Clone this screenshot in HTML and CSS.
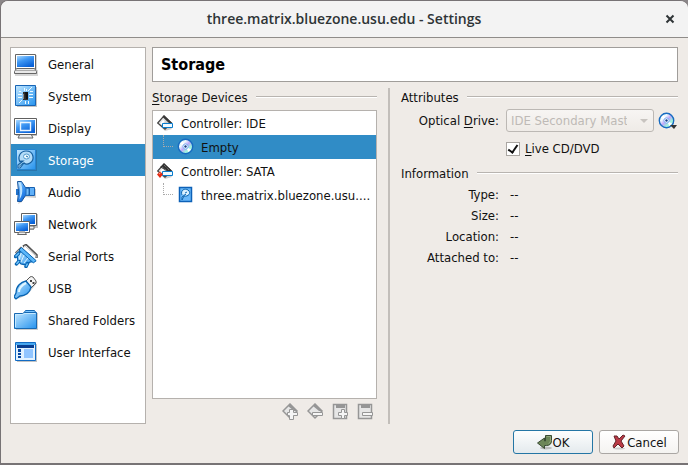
FILE: index.html
```html
<!DOCTYPE html>
<html lang="en">
<head>
<meta charset="utf-8">
<title>three.matrix.bluezone.usu.edu - Settings</title>
<link rel="stylesheet" href="styles.css">
</head>
<body>
<svg class="defs" aria-hidden="true">
  <defs>
    <linearGradient id="blue" x1="0" y1="0" x2=".6" y2="1"><stop offset="0" stop-color="#a8d8ff"/><stop offset=".45" stop-color="#3f98f4"/><stop offset="1" stop-color="#0b63d8"/></linearGradient>
    <linearGradient id="sky" x1="0" y1="0" x2="1" y2="1"><stop offset="0" stop-color="#c4e8ff"/><stop offset="1" stop-color="#2492ee"/></linearGradient>
    <linearGradient id="metal" x1="0" y1="0" x2="1" y2="1"><stop offset="0" stop-color="#fff"/><stop offset="1" stop-color="#aaa"/></linearGradient>
    <linearGradient id="disc" x1="0" y1="0" x2="1" y2="1"><stop offset="0" stop-color="#8cc8f4"/><stop offset=".3" stop-color="#f4ffff"/><stop offset=".5" stop-color="#c0a8f8"/><stop offset=".7" stop-color="#9df5dc"/><stop offset="1" stop-color="#eaf8ff"/></linearGradient>
    <symbol id="cd" viewBox="0 0 18 18">
      <circle cx="8.5" cy="8.500" r="7.200" fill="url(#disc)" stroke="#176bc1" stroke-width="1.400"/>
      <path d="M8.500 8.500L3 5.500 5.500 3z" fill="#fff"/><path d="M8.500 8.500L14 11.500 11.500 14z" fill="#fff"/>
      <circle cx="8.500" cy="8.500" r="2.600" fill="#fff" stroke="#78aef5"/><circle cx="8.500" cy="8.500" r="1.200" fill="#143e8b"/>
    </symbol>
    <symbol id="card" viewBox="0 0 18 18">
      <path d="M2 11l6 6 7-2-3-4z" fill="#888" opacity=".4"/>
      <path d="M.700 9L7 1.800 14.500 9 8 15.300z" fill="url(#metal)" stroke="#444" stroke-width="1.200"/>
      <path d="M7 1.200L15 9h-3L5.500 3z" fill="#383838"/>
      <path d="M4 10L7 6.500" stroke="#fff" stroke-width="2"/>
    </symbol>
    <symbol id="bar" viewBox="0 0 18 18"><path d="M5.500 9.500h10v4h-10z" fill="#f2faff" stroke="#087ccd"/></symbol>
  </defs>
</svg>
<div class="window">
  <header class="titlebar">
    <h1>three.matrix.bluezone.usu.edu - Settings</h1>
    <button class="close" aria-label="Close"><svg viewBox="0 0 10 10"><path d="M1.500 1.500l7 7M8.500 1.500l-7 7" stroke="#2e3436" stroke-width="2"/></svg></button>
  </header>
  <div class="content">
    <nav class="sidebar" aria-label="Settings categories">
      <a href="#general"><svg viewBox="0 0 24 24"><path d="M2 3h21v15h1v6H1v-6h1z" fill="#999" opacity=".4"/><path d="M1.500 2.500h20v15h-20z" fill="#fff" stroke="#666"/><path d="M3 4h17v11H3z" fill="url(#blue)"/><path d="M.500 19.500l2-3h18l2 3v2H.500z" fill="#e9e9e9" stroke="#666"/><path d="M2 18.500h19" stroke="#aaa"/></svg>General</a>
      <a href="#system"><svg viewBox="0 0 24 24"><path d="M3 3h20v20H3z" fill="#888" opacity=".5"/><path d="M1.500 1.500h20v20h-20z" fill="url(#sky)" stroke="#1764b5"/><path d="M9 8h5v8H9z" fill="#303030"/><path d="M11 8h3v7h-2z" fill="#111"/><path d="M9.500 10v5" stroke="#888"/><path d="M4 10.500h4M4 13.500h4M5 7.500h2l1 1M15 10.500h4M15 13.500h4M14 7l4-4M10.500 4v3M12.500 5v2M11.500 17v3M14.500 17v3M8 16l-3 3M16 7.500h3" stroke="#eefaff" fill="none"/></svg>System</a>
      <a href="#display"><svg viewBox="0 0 24 24"><path d="M2 4h21v16H2z" fill="#888" opacity=".5"/><path d="M6 18h11l2 4H4z" fill="#eee" stroke="#666"/><path d="M.500 2.500h22v16h-22z" fill="#fff" stroke="#606060"/><path d="M2 4h19v13H2z" fill="url(#blue)"/><path d="M6.500 6.500h10v8h-10z" fill="none" stroke="#eaf5ff" stroke-width="1.400"/></svg>Display</a>
      <a class="current" href="#storage" aria-current="page"><svg viewBox="0 0 24 24"><path d="M3 2h20v21H3z" fill="#245e91" opacity=".5"/><path d="M2.500 1.500h19v20h-19z" fill="url(#sky)" stroke="#2584d1"/><path d="M6 14C3 8 7 3 12 3c8 0 9 9 4 12-3 2-5 1-6 0l-4 5H4v-3l5-4c-2 0-3 0-3 1z" fill="#b3dcf8" stroke="#165f9f" stroke-width="1.200"/><ellipse cx="12.500" cy="8.500" rx="3" ry="2.500" fill="#edfaff" stroke="#529acc"/><path d="M12 8l2 1M9 15l-4 3.500" stroke="#146aaa"/></svg>Storage</a>
      <a href="#audio"><svg viewBox="0 0 24 24"><path d="M10 7l12 2v9l-12-1-2 5-4 2z" fill="#888" opacity=".4"/><path d="M2 9h3v6H2z" fill="#2374cd"/><path d="M3.500 1.500h4l4 6h4v8h-4l-4 6h-4q2-10 0-20z" fill="url(#blue)" stroke="#17549b"/><path d="M4.500 2.500h2c3 6 2 13-1 17 1-6 1-12-1-17z" fill="#bce3ff"/><path d="M12 8l3 .500v6.500l-3 .500z" fill="#75bdfa" stroke="#246cb5"/><path d="M15.500 7.500h5v8h-5z" fill="#60b0f8" stroke="#1760b1"/></svg>Audio</a>
      <a href="#network"><svg viewBox="0 0 24 24"><path d="M9 2h15v14h-4v2H10z" fill="#999" opacity=".6"/><path d="M7.500 1.500h15v12h-15z" fill="#fff" stroke="#606060"/><path d="M9 3h12v9H9z" fill="url(#blue)"/><path d="M13 14h7v3h-9z" fill="#eee" stroke="#666"/><path d="M.500 9.500h15v11H.500z" fill="#fff" stroke="#606060"/><path d="M2 11h12v8H2z" fill="url(#blue)"/><path d="M5 20h6l1.500 2.500h-9z" fill="#eee" stroke="#666"/></svg>Network</a>
      <a href="#serial"><svg viewBox="0 0 24 24"><path d="M2 9.500L8 3.500" stroke="#666" stroke-width="3"/><path d="M2.500 9L8 3.500" stroke="#eee"/><path d="M9 2.500L12 1l10.500 10v3" fill="none" stroke="#555" stroke-width="2.500"/><path d="M10 2.500l2-.500 10 9.500v2" fill="none" stroke="#eee"/><path d="M3 11l5-6L21 17l-5 1-4 3-5-1-3-3z" fill="url(#sky)" stroke="#0864b2" stroke-width="1.300"/><path d="M5 6L7.500 3.500 22 16.500 19.500 19z" fill="#5bb7fa" stroke="#0864b2"/><path d="M5 17l-2.500 3M13.500 19.500L12 22.500M1.500 12.500L5 9" stroke="#0864b2" stroke-width="3.500" stroke-linecap="round"/><path d="M5 17l-2.500 3M13.500 19.500L12 22.500M1.500 12.500L5 9" stroke="#6fc3fb" stroke-width="1.500"/><path d="M7 9l-2 7M10 11l-3 7M14 14l-4 5" stroke="#dbf3ff"/></svg>Serial Ports</a>
      <a href="#usb"><svg viewBox="0 0 24 24"><path d="M4 23l10-5 9-11-2-3z" fill="#777" opacity=".4"/><path d="M12 5l4-4q1-1 3 0l3 4v2l-5 5z" fill="#f4f4f4" stroke="#555"/><path d="M16 4h2v2h-2zM18.500 6h2v2h-2z" fill="#444"/><path d="M2 17c0-7 5-11 10-12l5 6c-1 6-6 9-11 9l-4 3-2-2z" fill="url(#sky)" stroke="#0864b2" stroke-width="1.300"/><path d="M5 16c0-4 3-7 7-9" stroke="#e2f6ff" stroke-width="2" fill="none"/></svg>USB</a>
      <a href="#folders"><svg viewBox="0 0 24 24"><path d="M2 5h22v17H2z" fill="#999" opacity=".5"/><path d="M9.500 5.500l2-3h9l2 3v4h-13z" fill="#7cc7ff" stroke="#1769b3"/><path d="M12 4.500h9" stroke="#e4f6ff"/><path d="M.500 5.500h8l2-1h12v16H.500z" fill="url(#sky)" stroke="#1769b3"/><path d="M1.500 19V6.500h7l2-1h11" fill="none" stroke="#c5e9ff"/></svg>Shared Folders</a>
      <a href="#interface"><svg viewBox="0 0 24 24"><path d="M3 4h20v18H3z" fill="#888" opacity=".5"/><path d="M1.500 2.500h20v18h-20z" fill="#e2f2ff" stroke="#126bc3"/><path d="M2 3h19v2H2z" fill="#46a7ef"/><path d="M3 5h17v3H3z" fill="#083e91"/><path d="M4 9h3v3H4zM4 13h3v2H4zM4 16h3v2H4z" fill="#0749a2"/><path d="M10 9h9v9h-9z" fill="#91c5ff"/></svg>User Interface</a>
    </nav>
    <main class="page">
      <h2>Storage</h2>
      <div class="panes">
        <section class="devices">
          <h3><span><u>S</u>torage Devices</span></h3>
          <ul class="tree" role="tree" aria-label="Storage Devices">
            <li class="controller" role="treeitem"><svg viewBox="0 0 18 18"><use href="#card"/><use href="#bar"/></svg>Controller: IDE</li>
            <li class="device selected" role="treeitem" aria-selected="true"><i></i><svg viewBox="0 0 18 18"><use href="#cd"/></svg><span>Empty</span></li>
            <li class="controller" role="treeitem"><svg viewBox="0 0 18 18"><use href="#card"/><path d="M3 5l4-3 7 6-3 2z" fill="#333"/><path d="M5 5l5 4M7 3l5 5" stroke="#888" stroke-dasharray="1 1"/><use href="#bar"/><path d="M0 12.500L3 9.500 6 12.500 3 16z" fill="#e52b13"/><path d="M2 12l1.500-1" stroke="#ffb09c"/></svg>Controller: SATA</li>
            <li class="device" role="treeitem"><i></i><svg viewBox="0 0 18 18"><path d="M2.500 1.500h12v14h-12z" fill="#68b8fa" stroke="#0d61b7" stroke-width="1.500"/><path d="M5 9c-2-5 3-7 6-5 4 3 0 7-4 6l-2 4v-3l4-3" fill="#d9f1ff" stroke="#0963ae"/><path d="M8 7l2-1" stroke="#166db7"/></svg><span>three.matrix.bluezone.usu....</span></li>
          </ul>
          <div class="tools">
            <button disabled aria-label="Add controller"><svg viewBox="0 0 18 18"><path d="M1 8L8 1l7 7-7 7z" fill="#e6e6e6" stroke="#969696" stroke-width="1.500"/><path d="M8 1l7 7h-3L6 3z" fill="#969696"/><path d="M7.500 9.500v-3h4v3h4v3h-4v4h-4v-4h-2v-3z" fill="#f5f5f5" stroke="#969696"/></svg></button>
            <button disabled aria-label="Remove controller"><svg viewBox="0 0 18 18"><path d="M1 8L8 1l7 7-7 7z" fill="#e6e6e6" stroke="#969696" stroke-width="1.500"/><path d="M8 1l7 7h-3L6 3z" fill="#969696"/><path d="M5.500 9.500h10v3h-10z" fill="#f5f5f5" stroke="#969696"/></svg></button>
            <button disabled aria-label="Add attachment"><svg viewBox="0 0 18 18"><path d="M1.500 1.500h13v14h-13z" fill="#e6e6e6" stroke="#969696" stroke-width="1.500"/><path d="M4 1h9v4H4z" fill="#969696"/><path d="M9.500 9.500v-3h3v3h3v3h-3v3h-3v-3h-3v-3z" fill="#f5f5f5" stroke="#969696"/></svg></button>
            <button disabled aria-label="Remove attachment"><svg viewBox="0 0 18 18"><path d="M1.500 1.500h13v14h-13z" fill="#e6e6e6" stroke="#969696" stroke-width="1.500"/><path d="M4 1h9v4H4z" fill="#969696"/><path d="M5.500 9.500h10v3h-10z" fill="#f5f5f5" stroke="#969696"/></svg></button>
          </div>
        </section>
        <section class="details">
          <h3>Attributes</h3>
          <div class="fields attributes">
            <label for="drive">Optical <u>D</u>rive:</label>
            <div class="drive">
              <select id="drive" disabled><option>IDE Secondary Master</option></select>
              <button class="choose" aria-label="Choose optical disk"><svg viewBox="0 0 20 18"><use href="#cd" width="18" height="18"/><path d="M12 13h7l-3 4z" fill="#333"/></svg></button>
            </div>
            <label class="check"><input type="checkbox" checked><span><u>L</u>ive CD/DVD</span></label>
          </div>
          <h3>Information</h3>
          <dl class="fields">
            <dt>Type:</dt><dd>--</dd>
            <dt>Size:</dt><dd>--</dd>
            <dt>Location:</dt><dd>--</dd>
            <dt>Attached to:</dt><dd>--</dd>
          </dl>
        </section>
      </div>
    </main>
  </div>
  <footer class="actions">
    <button class="primary"><svg viewBox="0 0 16 16"><ellipse cx="9" cy="14" rx="6" ry="1.500" fill="#bbb"/><path d="M8.500 1.500h6v5q0 5-5 5h-2v3L.500 9l7-5v3h1z" fill="#6d8658" stroke="#3b4c34"/><path d="M9.500 2.500h4v4q0 2-2 3" stroke="#91a77d" fill="none"/></svg>OK</button>
    <button><svg viewBox="0 0 16 16"><ellipse cx="8" cy="14.500" rx="6" ry="1" fill="#ccc"/><path d="M3 2h3l2 3 4-4 2 1-4 5 3 5-2 2-4-4-4 4-1-2 3-5z" fill="#ba3a46" stroke="#642329"/></svg>Cancel</button>
  </footer>
</div>
</body>
</html>
```
FILE: styles.css
```css
* { box-sizing: border-box; }
body {
  margin: 0;
  background: #8b8789;
  color: #111;
  font: 13px/21px "DejaVu Sans Condensed", "DejaVu Sans", sans-serif;
  font-stretch: condensed;
}
h1, h2, h3, ul, dl, dd { margin: 0; padding: 0; }
button, select, input { font: inherit; color: inherit; margin: 0; }
svg { display: block; flex: none; }
u { text-decoration: underline; text-underline-offset: 2px; }
.defs { position: absolute; width: 0; height: 0; }

.window {
  display: flex;
  flex-direction: column;
  min-height: 100vh;
  border: 1px solid #777375;
  border-width: 1px 0 2px 1px;
  border-radius: 8px 8px 0 0;
  background: #efebe7;
  overflow: hidden;
}
.titlebar {
  display: grid;
  grid-template-columns: 24px 1fr 24px;
  align-items: center;
  height: 37px;
  padding: 0 6px 0 5px;
  border-bottom: 1px solid #8f8c89;
  background: #f3f3f3;
}
.titlebar h1 {
  grid-column: 2;
  text-align: center;
  font-family: "Open Sans", "Noto Sans", sans-serif;
  font-stretch: normal;
  font-size: 14px;
  line-height: 20px;
  font-weight: 600;
  color: #2e3436;
}
.close { display: grid; place-items: center; height: 24px; padding: 0; border: 0; background: none; }
.close svg { width: 10px; height: 10px; }

.content {
  flex: 1;
  display: grid;
  grid-template-columns: 136px 1fr;
  gap: 6px;
  padding: 9px 10px 0 9px;
}
.sidebar { border: 1px solid #b5b1ad; background: #fff; }
.sidebar a {
  display: flex;
  align-items: center;
  gap: 10px;
  height: 32px;
  padding-left: 3px;
  color: inherit;
  text-decoration: none;
  white-space: nowrap;
}
.sidebar svg { width: 24px; height: 24px; }
.sidebar .current { background: #308cc6; color: #fff; }

.page { display: flex; flex-direction: column; min-width: 0; }
.page h2 {
  height: 35px;
  padding-left: 8px;
  border: 1px solid #a09d9a;
  background: #fff;
  font-size: 16px;
  line-height: 33px;
  color: #000;
}
.panes {
  flex: 1;
  display: grid;
  grid-template-columns: 225fr 290fr;
  gap: 11px;
  padding-top: 6px;
}
h3 {
  display: flex;
  align-items: center;
  gap: 8px;
  height: 18px;
  font-size: 13px;
  font-weight: 400;
}
h3::after { content: ""; flex: 1; border-top: 1px solid #b8b4b0; border-bottom: 1px solid #fff; }
.devices { display: flex; flex-direction: column; min-width: 0; }
.tree {
  flex: 1;
  margin-top: 4px;
  border: 1px solid #b5b1ad;
  background: #fff;
  list-style: none;
}
.tree li { display: flex; align-items: center; height: 24px; padding-left: 4px; }
.tree svg { width: 18px; height: 18px; }
.controller svg { margin-right: 6px; }
.device svg { margin: 0 6px 0 4px; }
.device span { min-width: 0; flex: 1; white-space: nowrap; }
.device i {
  flex: none;
  width: 10px;
  height: 12px;
  margin-left: 6px;
  align-self: flex-start;
  border: 1px dotted #aaa;
  border-width: 0 0 1px 1px;
}
.selected { background: #308cc6; }
.tools { display: flex; justify-content: flex-end; gap: 7px; height: 25px; padding: 4px 2px 0 0; }
.tools button { width: 18px; height: 18px; padding: 0; border: 0; background: none; }

.details { min-width: 0; padding-left: 11px; border-left: 2px solid #c2beba; }
.fields { display: grid; grid-template-columns: 98px 1fr; column-gap: 7px; }
.attributes { align-items: center; padding: 3px 0 5px; row-gap: 6px; }
.fields > label:first-child, dt { text-align: right; white-space: nowrap; }
dl.fields { padding-top: 2px; }
dd { padding-left: 4px; }
.drive { position: relative; display: flex; align-items: center; gap: 4px; min-width: 0; }
.drive::before {
  content: "";
  position: absolute;
  right: 30px;
  border: 4px solid transparent;
  border-top-color: #c8c4c0;
  border-bottom: 0;
}
select {
  appearance: none;
  flex: 1;
  min-width: 0;
  height: 23px;
  padding: 0 26px 0 4px;
  border: 1px solid #bcb8b4;
  border-radius: 3px;
  background: linear-gradient(#f7f5f3, #efebe7);
}
select:disabled { color: #bebab6; opacity: 1; }
.choose { width: 20px; height: 18px; padding: 0; border: 0; background: none; }
.check { grid-column: 2; display: flex; align-items: center; gap: 5px; }
.check input {
  appearance: none;
  display: grid;
  place-items: center;
  width: 14px;
  height: 14px;
  border: 1px solid #aaa6a2;
  background: #fff;
}
.check input:checked::after {
  content: "";
  width: 4px;
  height: 8px;
  margin-bottom: 2px;
  border: solid #111;
  border-width: 0 2px 2px 0;
  transform: rotate(35deg);
}
.actions { display: flex; justify-content: flex-end; gap: 6px; padding: 6px 9px 9px; }
.actions button {
  display: flex;
  align-items: center;
  justify-content: center;
  width: 80px;
  height: 24px;
  padding: 0;
  border: 1px solid #aaa7a4;
  border-radius: 3px;
  background: linear-gradient(#fff, #f4f3f1);
}
.actions svg { width: 16px; height: 16px; }
.actions .primary { border-color: #2476a5; background: linear-gradient(#fdfefe, #e4eaed); }
```
